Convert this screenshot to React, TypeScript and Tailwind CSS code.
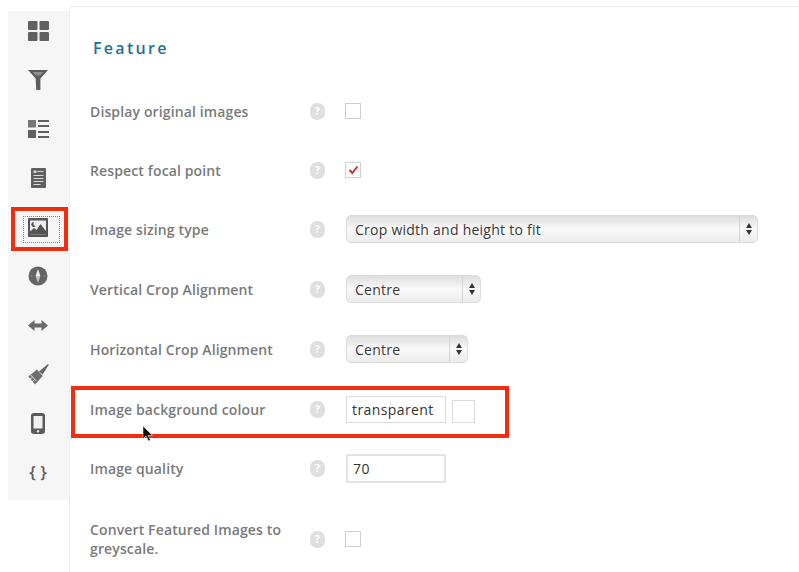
import type { ReactNode } from "react";

const font = "font-['Open_Sans',sans-serif]";

function GridIcon() {
  return (
    <svg width="21" height="20" viewBox="0 0 21 20" fill="#616161">
      <rect x="0" y="0" width="9.500" height="9" rx="1" />
      <rect x="11.500" y="0" width="9.500" height="9" rx="1" />
      <rect x="0" y="11" width="9.500" height="9" rx="1" />
      <rect x="11.500" y="11" width="9.500" height="9" rx="1" />
    </svg>
  );
}

function FilterIcon() {
  return (
    <svg width="20" height="20" viewBox="0 0 20 20" fill="#5c5c5c">
      <path d="M0 0h20l-7.600 8.600V20H8.300L7.600 8.600z" />
      <path d="M4.600 2h10.800l-3.400 3.600H8z" fill="#8f8f8f" />
    </svg>
  );
}

function ListIcon() {
  return (
    <svg width="21" height="20" viewBox="0 0 21 20" fill="#616161">
      <rect x="0" y="1" width="8" height="7.500" fill="#777" />
      <rect x="0" y="11" width="8" height="8" />
      <rect x="10" y="1" width="11" height="2" />
      <rect x="10" y="6" width="11" height="2" />
      <rect x="10" y="12" width="11" height="2" />
      <rect x="10" y="17" width="11" height="2" />
    </svg>
  );
}

function DocIcon() {
  return (
    <svg width="15" height="20" viewBox="0 0 15 20">
      <rect width="15" height="20" rx="1" fill="#5f5f5f" />
      <g fill="#d8d8d8">
        <rect x="2.500" y="2.500" width="3" height="2.500" />
        <rect x="6.500" y="3" width="6" height="1" />
        <rect x="2.500" y="7" width="10" height="1" />
        <rect x="2.500" y="10" width="10" height="1" />
        <rect x="2.500" y="13" width="10" height="1" />
        <rect x="2.500" y="16" width="7" height="1" />
      </g>
    </svg>
  );
}

function ImageIcon() {
  return (
    <svg width="20" height="19" viewBox="0 0 20 19">
      <rect width="20" height="19" rx="1" fill="#555" />
      <rect x="2" y="2.500" width="16" height="14" fill="#eee" />
      <path d="M2 16.500v-3l4-3.500 2.500 2 4-6 5.500 7v3.500z" fill="#555" />
      <path d="M6 4a2.500 2.500 0 1 0 1.500 4.300A2.800 2.800 0 0 1 6 4z" fill="#555" />
    </svg>
  );
}

function CompassIcon() {
  return (
    <svg width="20" height="20" viewBox="0 0 20 20">
      <circle cx="10" cy="10" r="9.500" fill="#646464" />
      <path d="M10 3l2.400 7H7.600z" fill="#f2f2f2" />
      <path d="M10 17l-2.400-7h4.800z" fill="#c4c4c4" />
      <circle cx="3.500" cy="10" r="0.800" fill="#999" />
      <circle cx="16.500" cy="10" r="0.800" fill="#999" />
    </svg>
  );
}

function ArrowsIcon() {
  return (
    <svg width="20" height="11" viewBox="0 0 20 11" fill="#6a6a6a">
      <path d="M0 5.500L6.500 0v3.500h7V0L20 5.500 13.500 11V7.500h-7V11z" />
    </svg>
  );
}

function BrushIcon() {
  return (
    <svg width="21" height="21" viewBox="0 0 21 21">
      <path d="M20 0l.800 .800-6.200 9.800-3.600-3.200z" fill="#666" />
      <path d="M9 5.500l5.700 6.500L7 20.500 .300 12.500z" fill="#6e6e6e" />
      <g stroke="#f6f6f6" strokeWidth="0.800">
        <path d="M2.400 10.500l5.600 6.400" />
        <path d="M4.600 13l-2.600 2.200M6.800 15.400l-2.600 2.400" />
        <path d="M3 14.800l-1.800 1.500M5.200 17.300l-1.600 1.400" />
      </g>
    </svg>
  );
}

function PhoneIcon() {
  return (
    <svg width="14" height="21" viewBox="0 0 14 21">
      <rect width="14" height="21" rx="3" fill="#5a5a5a" />
      <rect x="2.500" y="3" width="9" height="12.500" fill="#f0f0f0" />
      <circle cx="7" cy="18.200" r="1.200" fill="#e5e5e5" />
    </svg>
  );
}

const icons: ReactNode[] = [
  <GridIcon />,
  <FilterIcon />,
  <ListIcon />,
  <DocIcon />,
  <ImageIcon />,
  <CompassIcon />,
  <ArrowsIcon />,
  <BrushIcon />,
  <PhoneIcon />,
  <span className={`${font} text-[17px] leading-[20px] font-semibold text-[#5f5f5f]`}>{"{ }"}</span>,
];

function Sidebar() {
  return (
    <div className="mt-[11px] ml-[8px] flex h-[489px] w-[61px] flex-col items-center gap-[29px] bg-[#f6f6f6] pt-[10px] pr-[1px]">
      {icons.map((icon, i) => (
        <div key={i} className="relative flex h-[20px] w-[21px] items-center justify-center">
          {i === 4 && (
            <div className="absolute top-[-1px] left-[-5px] h-[27px] w-[37px] border border-dotted border-[#4a8fc0]" />
          )}
          {icon}
        </div>
      ))}
    </div>
  );
}

function Help() {
  return (
    <div className="flex h-[17px] w-[15px] shrink-0 items-center justify-center rounded-[7px] bg-[#dfdfdf] font-['Open_Sans',sans-serif] text-[10px] font-bold text-white">
      ?
    </div>
  );
}

function Checkbox({ checked }: { checked?: boolean }) {
  return (
    <div className="flex h-[16px] w-[16px] items-center justify-center border border-[#cfcfcf] bg-white">
      {checked && (
        <svg width="11" height="10" viewBox="0 0 11 10">
          <path d="M1.500 5l2.800 3L9.500 1.500" fill="none" stroke="#c8352f" strokeWidth="2" />
        </svg>
      )}
    </div>
  );
}

function Select({ width, value }: { width: string; value: string }) {
  return (
    <div
      className={`flex h-[28px] ${width} items-center rounded-[5px] border border-[#dcdcdc] bg-gradient-to-b from-[#dedede] via-[#f9f9f9] to-[#ececec] text-[14px] tracking-[0.25px] text-[#3a3a3a]`}
    >
      <span className="flex-1 pl-[8px]">{value}</span>
      <div className="flex h-full w-[18px] flex-col items-center justify-center gap-[2px] border-l border-[#d4d4d4]">
        <div className="h-0 w-0 border-x-[3.500px] border-b-[5px] border-x-transparent border-b-[#333]" />
        <div className="h-0 w-0 border-x-[3.500px] border-t-[5px] border-x-transparent border-t-[#333]" />
      </div>
    </div>
  );
}

function TextBox({ value, height, border }: { value: string; height: string; border: string }) {
  return (
    <div
      className={`flex ${height} w-[100px] items-center ${border} bg-white pl-[5px] text-[14px] tracking-[0.4px] text-[#333]`}
    >
      {value}
    </div>
  );
}

const rows: { label: ReactNode; control: ReactNode; top: string }[] = [
  { label: "Display original images", control: <Checkbox />, top: "mt-[19px]" },
  { label: "Respect focal point", control: <Checkbox checked />, top: "mt-[19px]" },
  {
    label: "Image sizing type",
    control: <div className="ml-[1px]"><Select width="w-[412px]" value="Crop width and height to fit" /></div>,
    top: "mt-[19px]",
  },
  {
    label: "Vertical Crop Alignment",
    control: <div className="ml-[1px]"><Select width="w-[135px]" value="Centre" /></div>,
    top: "mt-[20px]",
  },
  {
    label: "Horizontal Crop Alignment",
    control: <div className="ml-[1px]"><Select width="w-[122px]" value="Centre" /></div>,
    top: "mt-[20px]",
  },
  {
    label: "Image background colour",
    control: (
      <div className="ml-[1px] flex items-end gap-[6px]">
        <TextBox value="transparent" height="h-[27px]" border="border border-[#dcdcdc]" />
        <div className="h-[23px] w-[23px] border border-[#dcdcdc] bg-white" />
      </div>
    ),
    top: "mt-[20px]",
  },
  {
    label: "Image quality",
    control: <div className="ml-[1px]"><TextBox value="70" height="h-[29px]" border="border-2 border-[#e2e2e2]" /></div>,
    top: "mt-[19px]",
  },
  {
    label: (
      <>
        Convert Featured Images to
        <br />
        greyscale.
      </>
    ),
    control: <Checkbox />,
    top: "mt-[31px]",
  },
];

function Row({ label, control, top }: { label: ReactNode; control: ReactNode; top: string }) {
  return (
    <div className={`flex h-[40px] items-center ${top}`}>
      <div className="w-[220px] shrink-0 text-[14px] leading-[19px] font-semibold tracking-[0.13px] text-[#7a7a7a]">
        {label}
      </div>
      <Help />
      <div className="ml-[20px]">{control}</div>
    </div>
  );
}

export default function App() {
  return (
    <div className={`relative flex h-[572px] w-[799px] overflow-hidden bg-white ${font}`}>
      <Sidebar />
      <div className="mt-[6px] flex-1 rounded-tl-[4px] border-t border-l border-[#efefef] pl-[20px]">
        <h2 className="mt-[30px] ml-[3px] text-[16px] leading-[22px] font-semibold tracking-[2.3px] text-[#1f7299]">
          Feature
        </h2>
        <div className="mt-[32px]">
          {rows.map((row, i) => (
            <Row key={i} {...row} />
          ))}
        </div>
      </div>

      <div className="absolute top-[207px] left-[11px] h-[44px] w-[57px] border-[4px] border-[#f02d0f]" />
      <div className="absolute top-[386px] left-[71px] h-[52px] w-[438px] border-[4px] border-[#f02d0f]" />

      <svg className="absolute top-[426px] left-[142px]" width="12" height="17" viewBox="0 0 12 17">
        <path d="M1 0v13l3-3 2.500 5 2-1L6 9.500h4.500z" fill="#111" stroke="#fff" strokeWidth="0.500" />
      </svg>
    </div>
  );
}
